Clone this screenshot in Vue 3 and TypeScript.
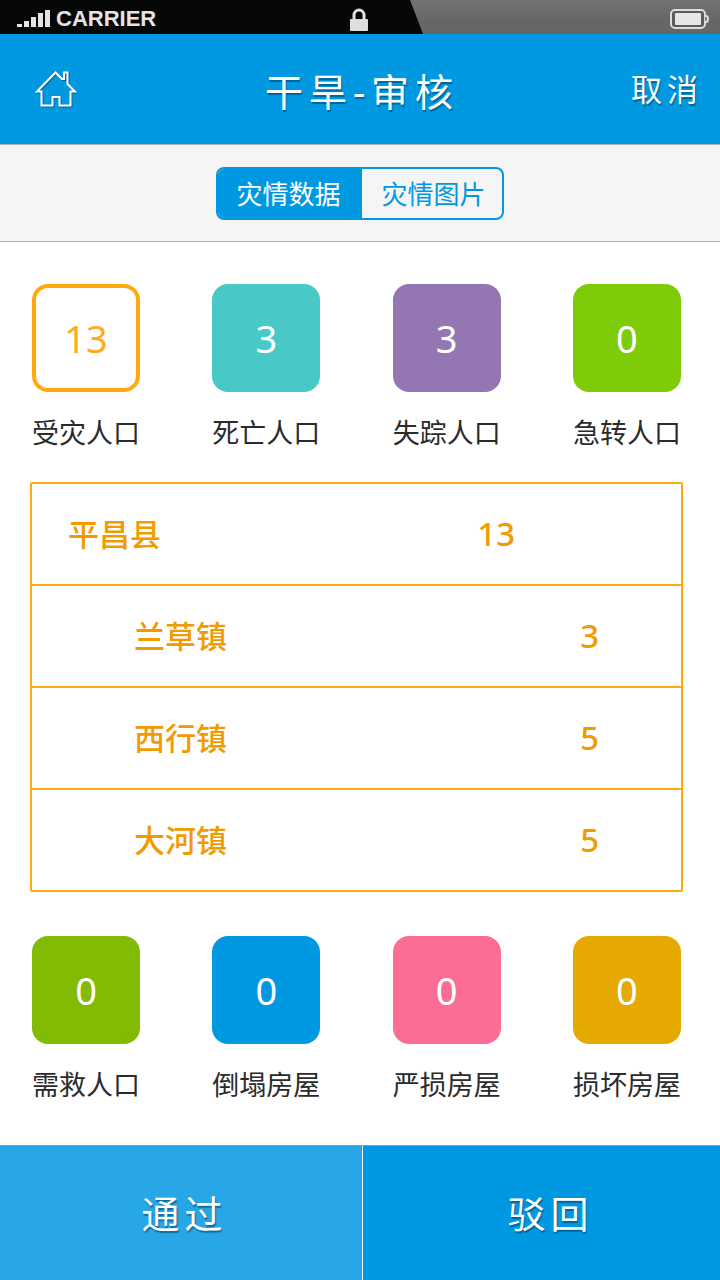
<script setup lang="ts">
import { ref } from 'vue'

interface Stat {
  label: string
  value: number
  tone: string
}

interface Area {
  name: string
  value: number
  child: boolean
}

const tabs: string[] = ['灾情数据', '灾情图片']
const activeTab = ref(0)
const selected = ref('受灾人口')

const people: Stat[] = [
  { label: '受灾人口', value: 13, tone: 'orange' },
  { label: '死亡人口', value: 3, tone: 'teal' },
  { label: '失踪人口', value: 3, tone: 'purple' },
  { label: '急转人口', value: 0, tone: 'lime' },
]

const losses: Stat[] = [
  { label: '需救人口', value: 0, tone: 'green' },
  { label: '倒塌房屋', value: 0, tone: 'blue' },
  { label: '严损房屋', value: 0, tone: 'pink' },
  { label: '损坏房屋', value: 0, tone: 'gold' },
]

const areas: Area[] = [
  { name: '平昌县', value: 13, child: false },
  { name: '兰草镇', value: 3, child: true },
  { name: '西行镇', value: 5, child: true },
  { name: '大河镇', value: 5, child: true },
]
</script>

<template>
  <div class="page">
    <div class="status">
      <div class="carrier">
        <svg width="34" height="18" viewBox="0 0 34 18" aria-hidden="true">
          <path d="M0 14h5v3H0zM7 11h5v6H7zM14 7h5v10h-5zM21 3h5v14h-5zM28 0h5v17h-5z" fill="#e4e4e4" />
        </svg>
        <span>CARRIER</span>
      </div>
      <svg class="lock" width="20" height="26" viewBox="0 0 20 26" aria-hidden="true">
        <path d="M4 13V8a5 5 0 0 1 10 0v5" fill="none" stroke="#e2e2e2" stroke-width="3" />
        <rect x="0" y="12" width="18" height="12" rx="1" fill="#dedede" />
      </svg>
      <div class="glass">
        <svg width="40" height="20" viewBox="0 0 40 20" aria-hidden="true">
          <rect x="1" y="1" width="34" height="18" rx="4" fill="#5c5c5c" stroke="#dcdcdc" stroke-width="2" />
          <rect x="5" y="4" width="26" height="12" rx="1" fill="#e6e6e6" />
          <path d="M35 7h1a2 3 0 0 1 0 6h-1" fill="#777" stroke="#dcdcdc" stroke-width="2" />
        </svg>
      </div>
    </div>

    <header class="header">
      <a class="home" href="#" aria-label="首页">
        <svg width="44" height="38" viewBox="0 0 44 38" aria-hidden="true">
          <path
            d="M21.500 2.500 3 21.500H7.500v14h11V27h7v8.500h11v-14H41L33.500 14V2.500H30V9h-2z"
            fill="none"
            stroke="#fff"
            stroke-width="2"
          />
        </svg>
      </a>
      <h1>干旱-审核</h1>
      <button class="cancel" type="button">取消</button>
    </header>

    <nav class="tabbar">
      <div class="tabs" role="tablist">
        <button
          v-for="(tab, i) in tabs"
          :key="tab"
          type="button"
          role="tab"
          class="tab"
          :class="{ active: activeTab === i }"
          :aria-selected="activeTab === i"
          @click="activeTab = i"
        >
          {{ tab }}
        </button>
      </div>
    </nav>

    <main class="content">
      <div class="stats">
        <button
          v-for="s in people"
          :key="s.label"
          type="button"
          class="stat"
          :class="[s.tone, { selected: selected === s.label }]"
          @click="selected = s.label"
        >
          <span class="tile">{{ s.value }}</span>
          <span class="label">{{ s.label }}</span>
        </button>
      </div>

      <table class="areas">
        <tbody>
          <tr v-for="a in areas" :key="a.name" :class="{ child: a.child }">
            <th scope="row">{{ a.name }}</th>
            <td>{{ a.value }}</td>
          </tr>
        </tbody>
      </table>

      <div class="stats">
        <button
          v-for="s in losses"
          :key="s.label"
          type="button"
          class="stat"
          :class="[s.tone, { selected: selected === s.label }]"
          @click="selected = s.label"
        >
          <span class="tile">{{ s.value }}</span>
          <span class="label">{{ s.label }}</span>
        </button>
      </div>
    </main>

    <footer class="actions">
      <button type="button" class="pass">通过</button>
      <button type="button" class="reject">驳回</button>
    </footer>
  </div>
</template>

<style>
body {
  margin: 0;
  background: #fff;
}
</style>

<style scoped>
.page {
  display: flex;
  flex-direction: column;
  min-height: 100vh;
  background: #fff;
  color: #2b2b2b;
  font-family: "Noto Sans", "Noto Sans CJK SC", sans-serif;
}

button {
  margin: 0;
  padding: 0;
  border: 0;
  background: none;
  color: inherit;
  font: inherit;
  cursor: pointer;
}

.status {
  display: grid;
  grid-template-columns: 1fr 20px 1fr;
  align-items: center;
  height: 34px;
  background: #060807;
}

.carrier {
  display: flex;
  align-items: center;
  gap: 5px;
  padding: 4px 0 0 17px;
  color: #e4e4e4;
  font: bold 22px/30px "Liberation Sans", sans-serif;
}

.lock {
  margin-top: 6px;
}

.glass {
  display: flex;
  align-items: center;
  justify-content: flex-end;
  height: 34px;
  margin-left: 40px;
  padding: 4px 10px 0 0;
  box-sizing: border-box;
  background: linear-gradient(#737373, #666 60%);
  clip-path: polygon(0 0, 100% 0, 100% 100%, 13px 100%);
}

.header {
  display: grid;
  grid-template-columns: 1fr auto 1fr;
  align-items: center;
  height: 110px;
  padding: 0 17px;
  background: #0099e1;
  color: #fff;
  text-shadow: 1px 2px 1px rgba(0, 50, 90, 0.5);
}

.home {
  display: flex;
  justify-self: start;
  padding-left: 17px;
  filter: drop-shadow(1px 1px 0 rgba(0, 50, 90, 0.5));
}

h1 {
  margin: 0;
  padding: 4px 0 0 4px;
  font-size: 38px;
  font-weight: 400;
  line-height: 56px;
  letter-spacing: 6px;
}

.cancel {
  justify-self: end;
  padding-bottom: 4px;
  font-size: 31px;
  letter-spacing: 5px;
  text-shadow: inherit;
}

.tabbar {
  display: flex;
  justify-content: center;
  padding: 22px 0 21px;
  border-top: 1px solid #b4b4b4;
  border-bottom: 1px solid #b0b0b0;
  background: #f5f5f5;
}

.tabs {
  display: flex;
  overflow: hidden;
  border: 2px solid #0099e1;
  border-radius: 8px;
}

.tab {
  padding: 2px 16px 0 20px;
  color: #0099e1;
  font-size: 26px;
  line-height: 47px;
}

.tab.active {
  padding: 2px 21px 0 18px;
  background: #0099e1;
  color: #fff;
}

.content {
  flex: 1;
  display: flex;
  flex-direction: column;
  padding: 42px 0 40px;
}

.stats {
  display: flex;
  justify-content: space-between;
  padding: 0 39px 0 32px;
}

.stat {
  display: flex;
  flex-direction: column;
  align-items: center;
  gap: 21px;
}

.tile {
  display: flex;
  align-items: center;
  justify-content: center;
  width: 108px;
  height: 108px;
  border: 4px solid var(--tone);
  border-radius: 16px;
  box-sizing: border-box;
  background: var(--tone);
  color: #fff;
  font-size: 38px;
}

.selected .tile {
  background: #fff;
  color: #ffaa22;
}

.label {
  font-size: 27px;
  line-height: 40px;
}

.orange { --tone: #ffa90f; }
.teal { --tone: #48c8c6; }
.purple { --tone: #9376b2; }
.lime { --tone: #7ecb08; }
.green { --tone: #83bb04; }
.blue { --tone: #0099e1; }
.pink { --tone: #fb6d95; }
.gold { --tone: #e6a902; }

.areas {
  margin: 29px 37px 44px 30px;
  border: 2px solid #ffa90f;
  border-radius: 2px;
  border-spacing: 0;
  table-layout: fixed;
  color: #f29b00;
  text-align: left;
}

.areas th,
.areas td {
  font-weight: 500;
}

.areas th {
  width: 68%;
  padding: 0 0 4px 36px;
  box-sizing: border-box;
  font-size: 31px;
}

.areas td {
  height: 98px;
  padding: 0 0 2px 4px;
  box-sizing: content-box;
  font-size: 33px;
}

.areas .child th {
  padding-left: 102px;
}

.areas .child td {
  padding-left: 107px;
}

.areas tr + tr > * {
  border-top: 2px solid #ffa90f;
}

.actions {
  display: grid;
  grid-template-columns: 362fr 358fr;
  border-top: 1px solid #8f9ba3;
  color: #fff;
}

.actions button {
  font-size: 38px;
  line-height: 134px;
  letter-spacing: 5px;
  text-shadow: 1px 2px 1px rgba(0, 50, 90, 0.5);
}

.actions .pass {
  padding-left: 7px;
  background: #27a7e5;
}

.actions .reject {
  padding-left: 18px;
  border-left: 1px solid #fff;
  background: #0099e1;
}
</style>
